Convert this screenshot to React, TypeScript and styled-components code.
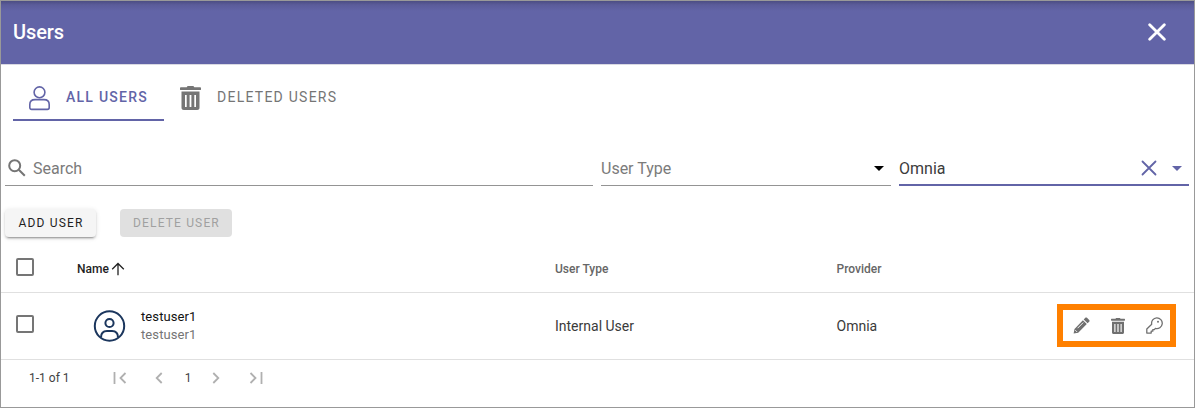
import React from "react";
import styled, { createGlobalStyle } from "styled-components";

const Global = createGlobalStyle`
  * { box-sizing: border-box; }
  body { margin: 0; background: #fff; font-family: Roboto, "Liberation Sans", sans-serif; }
  button { font-family: inherit; }
  svg { display: block; flex: none; }
`;

const Frame = styled.div`
  width: 1195px;
  height: 408px;
  border: 1px solid #999;
  background: #fff;
  overflow: hidden;
`;

const Header = styled.header`
  height: 64px;
  display: flex;
  align-items: center;
  justify-content: space-between;
  padding: 0 28px 1px 12px;
  color: #fff;
  background: linear-gradient(#4c4d83, #5b5c9a 4px, #6264a7 10px);
  border-bottom: 1px solid #d9d9e2;
`;

const Title = styled.h1`
  margin: 0;
  font-size: 20px;
  line-height: 32px;
  font-weight: 500;
  letter-spacing: -0.1px;
`;

const Plain = styled.button<{ $color?: string }>`
  display: flex;
  padding: 0;
  border: 0;
  background: none;
  color: ${(p) => p.$color ?? "inherit"};
`;

const Tabs = styled.nav`
  display: flex;
  height: 56px;
  padding-left: 12px;
`;

const Tab = styled.div<{ $active?: boolean }>`
  display: flex;
  align-items: center;
  gap: ${(p) => (p.$active ? 14 : 16)}px;
  height: 56px;
  width: ${(p) => (p.$active ? "151px" : "190px")};
  padding: 10px 0 0 ${(p) => (p.$active ? 13 : 16)}px;
  border-bottom: 2px solid ${(p) => (p.$active ? "#6264a7" : "transparent")};
  color: ${(p) => (p.$active ? "#6264a7" : "#757575")};
  font-size: 14px;
  font-weight: ${(p) => (p.$active ? 500 : 400)};
  letter-spacing: 1.25px;
  white-space: nowrap;
  svg { margin-top: 2px; }
`;

const Filters = styled.div`
  display: flex;
  align-items: flex-end;
  gap: 8px;
  height: 65px;
  padding: 0 5px 0 4px;
`;

const Field = styled.div<{ $w: number; $active?: boolean; $filled?: boolean }>`
  display: flex;
  align-items: center;
  width: ${(p) => p.$w}px;
  height: 34px;
  padding-bottom: ${(p) => (p.$active ? 0 : 1)}px;
  border-bottom: ${(p) => (p.$active ? "2px solid #6264a7" : "1px solid #949494")};
  font-size: 16px;
  font-weight: 400;
  color: ${(p) => (p.$filled ? "#3c3c3c" : "#7b7b7b")};
`;

const Value = styled.span<{ $left?: number }>`
  flex: 1;
  margin-left: ${(p) => p.$left ?? 0}px;
`;

const Caret = styled.span<{ $color: string; $right: number }>`
  margin: 1px ${(p) => p.$right}px 0 0;
  border: 5px solid transparent;
  border-top-color: ${(p) => p.$color};
  border-bottom: 0;
`;

const Actions = styled.div`
  display: flex;
  gap: 24px;
  padding: 23px 0 0 4px;
`;

const Button = styled.button<{ $w: number }>`
  width: ${(p) => p.$w}px;
  height: 28px;
  padding: 0 0 0 1px;
  border: 0;
  border-radius: 4px;
  background: #f5f5f5;
  color: #1f1f1f;
  font-size: 12px;
  font-weight: 400;
  letter-spacing: 1.15px;
  box-shadow: 0 3px 1px -2px rgba(0, 0, 0, 0.2), 0 2px 2px rgba(0, 0, 0, 0.14), 0 1px 5px rgba(0, 0, 0, 0.12);
  &:disabled {
    background: #e0e0e0;
    color: #a0a0a0;
    box-shadow: none;
  }
`;

const Row = styled.div<{ $h: number }>`
  display: grid;
  grid-template-columns: 76px 478px 281.5px 180px 1fr;
  align-items: center;
  height: ${(p) => p.$h}px;
  border-bottom: 1px solid #e0e0e0;
`;

const Head = styled.div<{ $dark?: boolean }>`
  display: flex;
  align-items: center;
  gap: 2px;
  padding-top: 9px;
  font-size: 12px;
  line-height: 16px;
  font-weight: 500;
  color: ${(p) => (p.$dark ? "#1f1f1f" : "#666")};
`;

const Check = styled.span<{ $top?: number }>`
  width: 18px;
  height: 18px;
  margin: ${(p) => p.$top ?? 0}px 0 0 15px;
  border: 2px solid #757575;
  border-radius: 2px;
`;

const Cell = styled.div`
  font-size: 14px;
  color: #3a3a3a;
`;

const Person = styled.div`
  display: flex;
  align-items: center;
  gap: 15px;
  padding-left: 16px;
`;

const Names = styled.div`
  font-size: 13px;
  line-height: 18px;
  font-weight: 400;
  letter-spacing: 0.1px;
  color: #111;
`;

const Sub = styled.div`
  color: #757575;
`;

const Tools = styled.div`
  justify-self: end;
  display: flex;
  align-items: center;
  justify-content: space-between;
  width: 119px;
  height: 43px;
  margin: 0 18px 2px 0;
  padding: 1px 7px 0 10px;
  border: 6px solid #ff8000;
  color: #707070;
`;

const Pager = styled.footer`
  display: flex;
  align-items: center;
  height: 36px;
  padding-left: 28px;
  font-size: 12px;
  color: #424242;
`;

const Count = styled.span`
  width: 84px;
`;

const Steps = styled.div`
  display: flex;
  align-items: center;
  color: #b0b0b0;
`;

const Page = styled.span`
  width: 49px;
  padding-left: 1px;
  text-align: center;
  color: #424242;
`;

const Gap = styled.span<{ $w: number }>`
  width: ${(p) => p.$w}px;
`;

const Cross = ({ size, weight }: { size: number; weight: number }) => (
  <svg width={size} height={size} viewBox="0 0 16 16" fill="none" stroke="currentColor" strokeWidth={weight} strokeLinecap="round">
    <path d="M1.5 1.5l13 13M14.5 1.5l-13 13" />
  </svg>
);

const UserIcon = () => (
  <svg width="26" height="26" viewBox="0 0 26 26" fill="none" stroke="currentColor" strokeWidth="1.6">
    <circle cx="13.5" cy="7.3" r="5.4" />
    <path d="M9 14.600h9c3.300 0 5.200 2.200 5.200 5v3c0 1-.8 1.800-1.800 1.800H5.600c-1 0-1.800-.8-1.800-1.800v-3c0-2.800 1.900-5 5.200-5z" />
  </svg>
);

const TrashIcon = ({ w, h }: { w: number; h: number }) => (
  <svg width={w} height={h} viewBox="0 0 21 24" fill="currentColor">
    <path d="M.8 1.3h5.9L7.6 0h5.8l.9 1.3h5.900c.5 0 .8.3.8.8v1.3c0 .4-.3.7-.8.7H.8c-.5 0-.8-.3-.8-.7V2.100c0-.5.3-.8.8-.8z" />
    <path fillRule="evenodd" d="M1.500 5.500h18v16.200c0 1.300-1 2.300-2.300 2.300H3.800c-1.300 0-2.300-1-2.300-2.300zM5 9v12h1.700V9zM9.600 9v12h1.800V9zM14.300 9v12H16V9z" />
  </svg>
);

const SearchIcon = () => (
  <svg width="18" height="18" viewBox="0 0 18 18" fill="none" stroke="#757575" strokeWidth="2">
    <circle cx="6.700" cy="6.700" r="5.500" />
    <path d="M10.800 10.800l6 6" />
  </svg>
);

const ArrowUp = () => (
  <svg width="14" height="14" viewBox="0 0 14 14" fill="none" stroke="#222" strokeWidth="1.300">
    <path d="M7 13.200V1.800M1.200 7.300L7 1.500l5.800 5.800" />
  </svg>
);

const Avatar = () => (
  <svg width="33" height="33" viewBox="0 0 33 33" fill="none" stroke="#1b365d" strokeWidth="2">
    <circle cx="16.500" cy="16" r="14.700" />
    <circle cx="16.500" cy="13" r="4.100" />
    <path d="M8 27.500c0-4.400 2.500-6.500 6-6.500h5c3.500 0 6 2.100 6 6.500" />
  </svg>
);

const Pencil = () => (
  <svg width="17" height="17" viewBox="0 0 17 17">
    <path fill="currentColor" d="M12.300.8c.5-.5 1.200-.5 1.700 0l2.200 2.200c.5.500.5 1.200 0 1.700L14.600 6.300 10.700 2.400zM9.900 3.200l3.900 3.900-8.600 8.600-4.600.9.900-4.700z" />
    <path d="M4.600 11.200l5.600-5.600M2.300 13.200l1.700 1.700" stroke="#fff" strokeWidth=".9" fill="none" />
  </svg>
);

const KeyIcon = () => (
  <svg width="17" height="17" viewBox="0 0 17 17" fill="none" stroke="currentColor" strokeWidth="1.300" strokeLinejoin="round">
    <path d="M10.700.8a5.400 5.400 0 1 1-1.300 10.600L8.300 12.600H6.800v1.600H5.200v1.900H.8v-4.100l4.900-4.700A5.400 5.400 0 0 1 10.700.8z" />
    <circle cx="12" cy="4.800" r="1" fill="currentColor" stroke="none" />
  </svg>
);

const Step = ({ next, edge }: { next?: boolean; edge?: boolean }) => (
  <svg width={edge ? 14 : 8} height="12" viewBox={edge ? "0 0 14 12" : "0 0 8 12"} fill="none" stroke="currentColor" strokeWidth="1.800">
    {edge ? (
      <path d={next ? "M1.500 1l5 5-5 5M12.500 0v12" : "M12.500 1l-5 5 5 5M1.500 0v12"} />
    ) : (
      <path d={next ? "M1.300 1l5 5-5 5" : "M6.700 1l-5 5 5 5"} />
    )}
  </svg>
);

export default function App() {
  return (
    <>
      <Global />
      <Frame>
        <Header>
          <Title>Users</Title>
          <Plain aria-label="Close"><Cross size={18} weight={2.5} /></Plain>
        </Header>
        <Tabs>
          <Tab $active><UserIcon /><span>ALL USERS</span></Tab>
          <Tab><TrashIcon w={21} h={24} /><span>DELETED USERS</span></Tab>
        </Tabs>
        <Filters>
          <Field $w={588}>
            <Gap $w={3} />
            <SearchIcon />
            <Value $left={7}>Search</Value>
          </Field>
          <Field $w={290}>
            <Value>User Type</Value>
            <Caret $color="#000" $right={7} />
          </Field>
          <Field $w={290} $active $filled>
            <Value>Omnia</Value>
            <Plain aria-label="Clear" $color="#6264a7"><Cross size={16} weight={1.8} /></Plain>
            <Gap $w={15} />
            <Caret $color="#6264a7" $right={7} />
          </Field>
        </Filters>
        <Actions>
          <Button $w={91}>ADD USER</Button>
          <Button $w={112} disabled>DELETE USER</Button>
        </Actions>
        <Row $h={56}>
          <Check $top={4} />
          <Head $dark>Name<ArrowUp /></Head>
          <Head>User Type</Head>
          <Head>Provider</Head>
        </Row>
        <Row $h={67}>
          <Check $top={-4} />
          <Person>
            <Avatar />
            <Names>testuser1<Sub>testuser1</Sub></Names>
          </Person>
          <Cell>Internal User</Cell>
          <Cell>Omnia</Cell>
          <Tools>
            <Pencil />
            <TrashIcon w={14} h={16} />
            <KeyIcon />
          </Tools>
        </Row>
        <Pager>
          <Count>1-1 of 1</Count>
          <Steps>
            <Step edge />
            <Gap $w={28} />
            <Step />
            <Page>1</Page>
            <Step next />
            <Gap $w={29} />
            <Step next edge />
          </Steps>
        </Pager>
      </Frame>
    </>
  );
}
